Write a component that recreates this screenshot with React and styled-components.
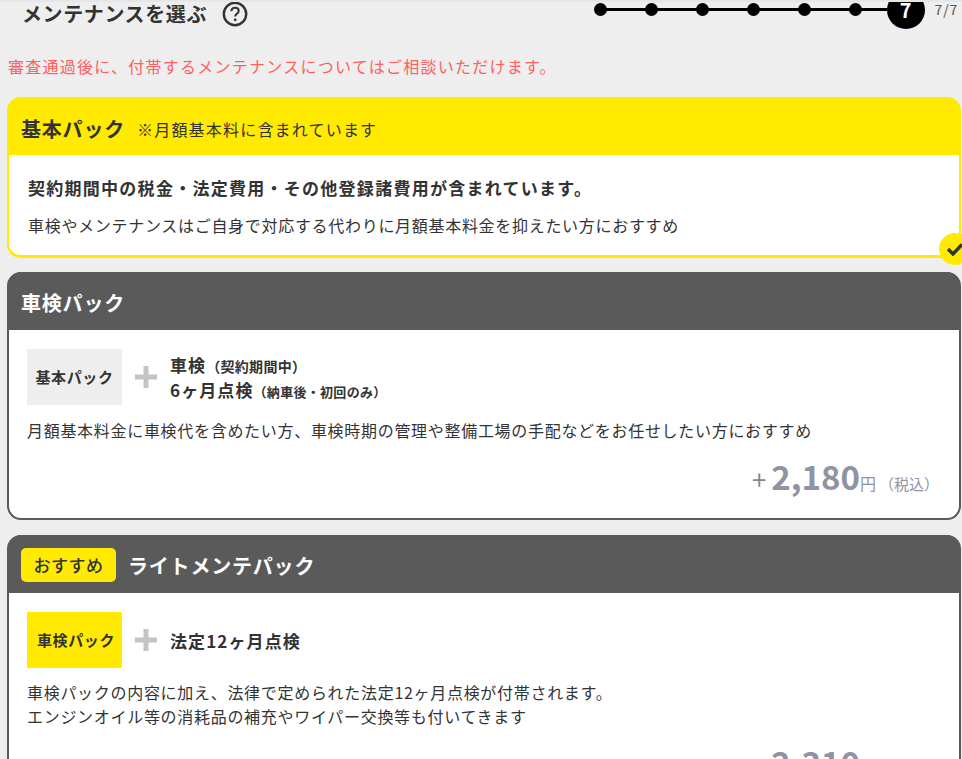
import React from "react";
import styled, { createGlobalStyle } from "styled-components";

const GlobalStyle = createGlobalStyle`
  html, body {
    margin: 0;
    padding: 0;
    background: #eeeeee;
    overflow: hidden;
  }
  body {
    font-family: "Noto Sans CJK JP", "Noto Sans", sans-serif;
    color: #333;
  }
`;

const Page = styled.div`
  width: 962px;
  height: 759px;
  overflow: hidden;
  background: #eeeeee;
  border-top: 2px solid #e6e6e6;
  box-sizing: border-box;
`;

const Header = styled.div`
  display: flex;
  justify-content: space-between;
  height: 30px;
`;

const TitleRow = styled.div`
  display: flex;
  align-items: center;
  gap: 15px;
  padding-left: 22px;
  height: 24px;
`;

const Title = styled.h1`
  margin: 0;
  font-size: 20px;
  line-height: 24px;
  font-weight: 700;
  letter-spacing: 0.6px;
  color: #333;
`;

const HelpIcon = styled.svg`
  width: 26px;
  height: 26px;
  display: block;
`;

const StepArea = styled.div`
  display: flex;
  align-items: flex-start;
  gap: 10px;
  padding-right: 4px;
`;

const Steps = styled.div`
  position: relative;
  display: flex;
  align-items: center;
  gap: 38px;
  height: 39px;
  margin-top: -12px;
  &::before {
    content: "";
    position: absolute;
    left: 8px;
    right: 20px;
    top: 18px;
    height: 3px;
    background: #000;
  }
`;

const StepDot = styled.span`
  position: relative;
  flex: none;
  width: 13px;
  height: 13px;
  border-radius: 50%;
  background: #000;
`;

const StepCurrent = styled.span`
  position: relative;
  flex: none;
  width: 38px;
  height: 38px;
  margin-left: -13px;
  border-radius: 50%;
  background: #000;
  color: #fff;
  font-size: 20px;
  font-weight: 700;
  line-height: 38px;
  text-align: center;
`;

const StepCount = styled.span`
  font-size: 14px;
  line-height: 14px;
  color: #555;
  letter-spacing: 0.8px;
`;

const Notice = styled.p`
  margin: 22px 0 0 8px;
  font-size: 16px;
  line-height: 24px;
  letter-spacing: 1.25px;
  color: #ff5f5f;
`;

const Cards = styled.div`
  display: flex;
  flex-direction: column;
  gap: 15px;
  margin: 19px 1px 0 7px;
`;

const Card = styled.section`
  position: relative;
  flex: none;
  box-sizing: border-box;
  background: #fff;
  border: 2px solid ${(p) => (p.$selected ? "#ffea00" : "#5a5a5a")};
  border-width: ${(p) => (p.$selected ? "3px 2px" : "2px")};
  border-radius: 14px;
  margin-bottom: ${(p) => (p.$selected ? "-1px" : "0")};
`;

const CardHead = styled.div`
  display: flex;
  align-items: center;
  box-sizing: border-box;
  height: 58px;
  padding: ${(p) => (p.$selected ? "6px 0 0 13px" : "4px 0 0 13px")};
  gap: 12px;
  margin: ${(p) => (p.$selected ? "-3px -1px 0" : "-2px -1px 0")};
  border-radius: 14px 14px 0 0;
  background: ${(p) => (p.$selected ? "#ffea00" : "#5a5a5a")};
`;

const CardName = styled.h2`
  margin: 0;
  font-size: 20px;
  line-height: 28px;
  font-weight: 700;
  letter-spacing: 0.8px;
  color: ${(p) => (p.$selected ? "#333" : "#fff")};
`;

const HeadNote = styled.span`
  font-size: 16px;
  line-height: 22px;
  color: #333;
  letter-spacing: 1.2px;
`;

const RecommendTag = styled.span`
  width: 95px;
  height: 34px;
  margin-top: -3px;
  border-radius: 5px;
  background: #ffea00;
  color: #333;
  font-size: 17px;
  font-weight: 500;
  line-height: 34px;
  letter-spacing: 0.5px;
  text-align: center;
`;

const CardBody = styled.div`
  padding: ${(p) => p.$padding};
`;

const Lead = styled.p`
  margin: 0 0 10px;
  font-size: 17px;
  line-height: 30px;
  font-weight: 700;
  letter-spacing: 1.27px;
  color: #333;
`;

const Desc = styled.p`
  margin: 0;
  font-size: 16px;
  line-height: 24px;
  letter-spacing: 0.7px;
  color: #333;
`;

const PackRow = styled.div`
  display: flex;
  align-items: center;
  margin-bottom: ${(p) => p.$gap}px;
`;

const PackBox = styled.div`
  flex: none;
  box-sizing: border-box;
  width: 95px;
  height: 56px;
  padding-left: ${(p) => (p.$yellow ? "3px" : "0")};
  background: ${(p) => (p.$yellow ? "#ffea00" : "#eeeeee")};
  color: #333;
  font-size: 15px;
  font-weight: 700;
  line-height: 56px;
  letter-spacing: 0.6px;
  text-align: center;
`;

const PlusIcon = styled.svg`
  flex: none;
  width: 22px;
  height: 22px;
  margin: 0 13px;
  display: block;
`;

const PackLines = styled.div`
  display: flex;
  flex-direction: column;
`;

const PackLine = styled.div`
  font-size: 17px;
  line-height: 25px;
  font-weight: 700;
  letter-spacing: 1.1px;
  color: #333;
`;

const PackSub = styled.small`
  font-size: ${(p) => (p.$large ? "14px" : "13px")};
  line-height: 1;
  font-weight: 700;
  letter-spacing: 0.3px;
`;

const PriceRow = styled.div`
  display: flex;
  align-items: baseline;
  justify-content: flex-end;
  padding: 13px 20px 18px 0;
  color: #9093a3;
`;

const PricePlus = styled.span`
  font-size: 26px;
  line-height: 42px;
  font-weight: 400;
  color: #888;
  margin-right: 5px;
`;

const PriceValue = styled.strong`
  font-size: 33px;
  line-height: 42px;
  font-weight: 700;
`;

const PriceUnit = styled.span`
  font-size: 16px;
`;

const PriceTax = styled.span`
  font-size: 15px;
  margin-left: 3px;
`;

const CheckBadge = styled.span`
  position: absolute;
  right: -12px;
  bottom: -10px;
  width: 32px;
  height: 32px;
  border-radius: 50%;
  background: #ffea00;
  display: flex;
  align-items: center;
  justify-content: center;
`;

const Plus = () => (
  <PlusIcon viewBox="0 0 22 22">
    <path d="M8.500 0h5v8.500H22v5h-8.500V22h-5v-8.500H0v-5h8.500z" fill="#c4c4c4" />
  </PlusIcon>
);

const Price = ({ value }) => (
  <PriceRow>
    <PricePlus>+</PricePlus>
    <PriceValue>{value}</PriceValue>
    <PriceUnit>円</PriceUnit>
    <PriceTax>（税込）</PriceTax>
  </PriceRow>
);

export default function App() {
  return (
    <Page>
      <GlobalStyle />
      <Header>
        <TitleRow>
          <Title>メンテナンスを選ぶ</Title>
          <HelpIcon viewBox="0 0 26 26">
            <circle cx="13" cy="13" r="11.200" fill="none" stroke="#333" strokeWidth="2.400" />
            <path d="M9.400 10.200c0-2.100 1.600-3.500 3.700-3.500s3.600 1.300 3.600 3.200c0 1.500-.9 2.300-1.900 3-1 .7-1.600 1.200-1.600 2.500" fill="none" stroke="#333" strokeWidth="2" />
            <circle cx="13.200" cy="18.800" r="1.400" fill="#333" />
          </HelpIcon>
        </TitleRow>
        <StepArea>
          <Steps>
            {[1, 2, 3, 4, 5, 6].map((n) => (
              <StepDot key={n} />
            ))}
            <StepCurrent>7</StepCurrent>
          </Steps>
          <StepCount>7/7</StepCount>
        </StepArea>
      </Header>

      <Notice>審査通過後に、付帯するメンテナンスについてはご相談いただけます。</Notice>

      <Cards>
        <Card $selected>
          <CardHead $selected>
            <CardName $selected>基本パック</CardName>
            <HeadNote>※月額基本料に含まれています</HeadNote>
          </CardHead>
          <CardBody $padding="18px 19px 18px">
            <Lead>契約期間中の税金・法定費用・その他登録諸費用が含まれています。</Lead>
            <Desc>車検やメンテナンスはご自身で対応する代わりに月額基本料金を抑えたい方におすすめ</Desc>
          </CardBody>
          <CheckBadge>
            <svg width="18" height="14" viewBox="0 0 18 14">
              <path d="M2 7l5 5L16 2.500" fill="none" stroke="#333" strokeWidth="3.400" />
            </svg>
          </CheckBadge>
        </Card>

        <Card>
          <CardHead>
            <CardName>車検パック</CardName>
          </CardHead>
          <CardBody $padding="19px 18px 0">
            <PackRow $gap={13}>
              <PackBox>基本パック</PackBox>
              <Plus />
              <PackLines>
                <PackLine>車検<PackSub $large>（契約期間中）</PackSub></PackLine>
                <PackLine>6ヶ月点検<PackSub>（納車後・初回のみ）</PackSub></PackLine>
              </PackLines>
            </PackRow>
            <Desc>月額基本料金に車検代を含めたい方、車検時期の管理や整備工場の手配などをお任せしたい方におすすめ</Desc>
          </CardBody>
          <Price value="2,180" />
        </Card>

        <Card>
          <CardHead>
            <RecommendTag>おすすめ</RecommendTag>
            <CardName>ライトメンテパック</CardName>
          </CardHead>
          <CardBody $padding="19px 18px 0">
            <PackRow $gap={12}>
              <PackBox $yellow>車検パック</PackBox>
              <Plus />
              <PackLines>
                <PackLine>法定12ヶ月点検</PackLine>
              </PackLines>
            </PackRow>
            <Desc>
              車検パックの内容に加え、法律で定められた法定12ヶ月点検が付帯されます。
              <br />
              エンジンオイル等の消耗品の補充やワイパー交換等も付いてきます
            </Desc>
          </CardBody>
          <Price value="2,310" />
        </Card>
      </Cards>
    </Page>
  );
}
